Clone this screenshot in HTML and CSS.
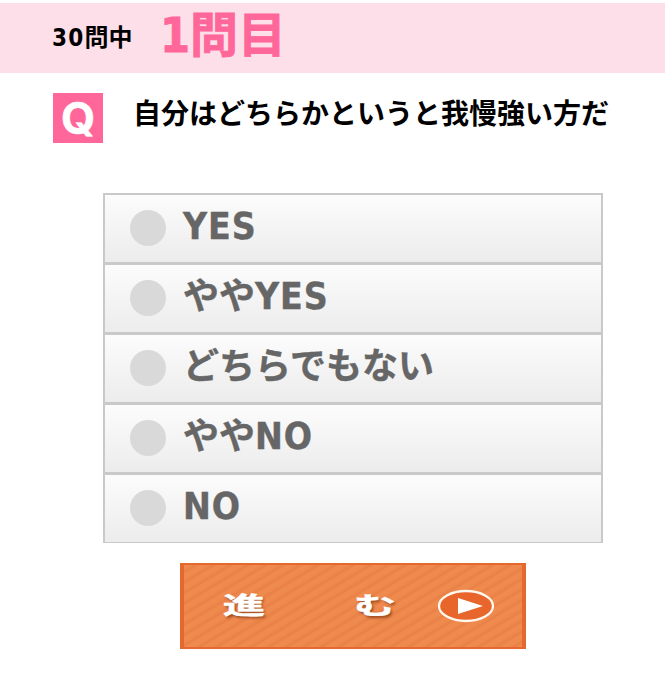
FILE: index.html
```
<!DOCTYPE html>
<html lang="ja">
<head>
<meta charset="utf-8">
<title>1問目</title>
<link rel="stylesheet" href="styles.css">
</head>
<body>
<header class="progress"><span class="total"><span class="latin">30</span>問中</span><h1 class="current"><span class="latin">1</span>問目</h1></header>
<main>
<section class="question"><span class="badge">Q</span><h2 class="text">自分はどちらかというと我慢強い方だ</h2></section>
<ul class="options">
<li class="option"><span class="radio"></span><span class="label"><span class="latin">YES</span></span></li>
<li class="option"><span class="radio"></span><span class="label">やや<span class="latin">YES</span></span></li>
<li class="option"><span class="radio"></span><span class="label">どちらでもない</span></li>
<li class="option"><span class="radio"></span><span class="label">やや<span class="latin">NO</span></span></li>
<li class="option"><span class="radio"></span><span class="label"><span class="latin">NO</span></span></li>
</ul>
<button class="next" type="button"><span class="char">進</span><span class="char">む</span><svg class="arrow" width="58" height="34" viewBox="0 0 58 34"><ellipse cx="29" cy="17" rx="27" ry="15" fill="#e8652b" stroke="#fff8ee" stroke-width="2.3"/><path d="M21 9 L46 17 L21 25 Z" fill="#fff"/></svg></button>
</main>
</body>
</html>
```
FILE: styles.css
```
* { box-sizing: border-box; }
body { margin: 0; padding-top: 3px; background: #fff; color: #000; font-family: "Noto Sans CJK JP", sans-serif; font-weight: 700; }
h1, h2, ul { margin: 0; padding: 0; }
.latin { font-family: "DejaVu Sans Condensed", "DejaVu Sans", sans-serif; font-stretch: condensed; }
.progress { display: flex; height: 70px; padding-left: 52px; background: #fddfe9; }
.total { width: 108px; font-size: 24px; line-height: 65px; white-space: nowrap; }
.total .latin { letter-spacing: 1.2px; }
.current { color: #ff6699; font-size: 48px; line-height: 57px; white-space: nowrap; -webkit-text-stroke: 0.8px #ff6699; }
.question { display: flex; padding: 20px 0 0 53px; height: 120px; }
.badge { width: 50px; height: 50px; background: #ff6699; color: #fff; font: 700 44px/50px Inter, sans-serif; text-align: center; -webkit-text-stroke: 0.5px #fff; }
.text { margin-left: 30px; font-size: 28px; line-height: 38px; white-space: nowrap; }
.options { width: 500px; height: 350px; margin-left: 103px; border: 2px solid #c9c9c9; border-bottom-width: 1px; list-style: none; }
.option { display: flex; height: 70px; padding-left: 25px; border-bottom: 3px solid #c9c9c9; background: linear-gradient(#fcfcfc, #ececec); }
.option:last-child { height: 67px; border-bottom: 0; }
.radio { width: 36px; height: 36px; margin-top: 15px; border-radius: 50%; background: #d9d9d9; }
.label { margin-left: 17px; color: #666; font-size: 36px; line-height: 56px; white-space: nowrap; -webkit-text-stroke: 0.4px #666; }
.label .latin { font-size: 37px; letter-spacing: 1px; }
.next { display: flex; align-items: center; width: 346px; height: 86px; margin: 20px 0 0 180px; padding: 0; border: solid #e5682f; border-width: 2px 4px; color: #fff; background: repeating-linear-gradient(149deg, #f08b50 0, #ef8a4f 3px, #e98146 6px, #f08b50 9px); }
.char { width: 24px; margin: -4px 0 0 48px; font: 700 24px/40px "Noto Sans CJK JP", sans-serif; transform: scaleX(1.77); text-shadow: 1px 2px 2px #9b4a20; -webkit-text-stroke: 0.4px #fff; }
.char + .char { margin-left: 107px; }
.arrow { margin-left: 50px; }
```
